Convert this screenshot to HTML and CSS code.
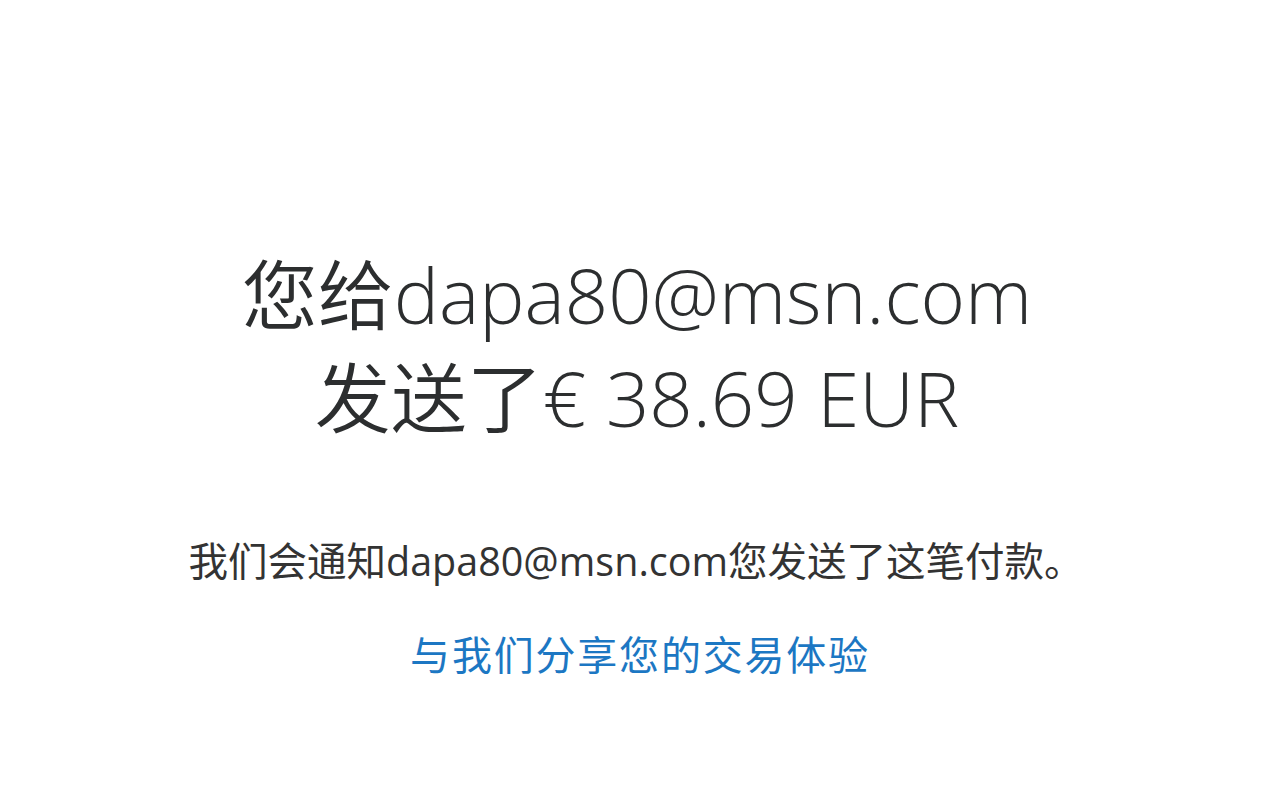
FILE: index.html
```html
<!DOCTYPE html>
<html lang="zh-CN">
<head>
    <meta charset="UTF-8">
    <meta name="viewport" content="width=device-width, initial-scale=1.0">
    <title>付款已发送</title>
    <link rel="stylesheet" href="styles.css">
</head>
<body>
    <div class="page">
        <div class="done">
            <h1 class="headline"><span class="han">您给</span>dapa80@msn.com<br><span class="han">发送了</span>€ 38.69 EUR</h1>
            <p class="notice">我们会通知dapa80@msn.com您发送了这笔付款。</p>
            <a class="feedback" href="#">与我们分享您的交易体验</a>
        </div>
    </div>
</body>
</html>
```

FILE: styles.css
```css
html, body {
    margin: 0;
    padding: 0;
    background-color: #fff;
}
body {
    font-family: "Open Sans", "Noto Sans CJK SC", sans-serif;
    color: #2c2e2f;
}
.page {
    display: flex;
    justify-content: center;
    padding-top: 243px;
}
.done {
    display: flex;
    flex-direction: column;
    align-items: center;
    text-align: center;
}
.headline {
    margin: 0;
    font-size: 76px;
    font-weight: 300;
    line-height: 103px;
    color: #2c2e2f;
}
.headline .han {
    font-weight: 350;
    margin-left: -6px;
}
.notice {
    margin: 87px 0 0 -8px;
    font-size: 39.5px;
    line-height: 50px;
    color: #333;
}
.feedback {
    margin-top: 44px;
    font-size: 40px;
    line-height: 50px;
    letter-spacing: 1.8px;
    color: #1c77c3;
    text-decoration: none;
}
```
